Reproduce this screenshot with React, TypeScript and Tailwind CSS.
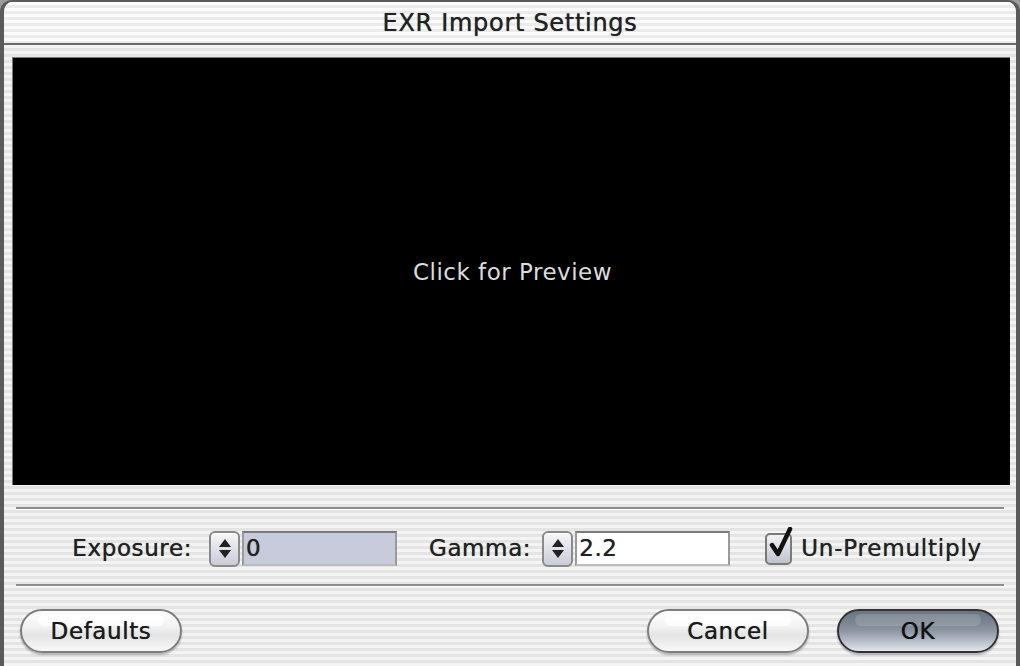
import React from "react";

const stripes =
  "bg-[repeating-linear-gradient(180deg,#f4f4f4_0px,#f4f4f4_3px,#e4e4e4_3px,#e4e4e4_6px)]";

const thick = "[text-shadow:0_0_0.7px_rgba(20,20,20,0.8)]";

function Stepper() {
  return (
    <div className="w-[31px] h-[36px] rounded-[6px] border-2 border-[#8a8a8a] bg-gradient-to-b from-[#f6f7fa] to-[#c9ccd6] flex flex-col items-center justify-center gap-[3px] shadow-[inset_0_1px_1px_rgba(255,255,255,0.9)]">
      <svg width="12" height="8" viewBox="0 0 12 8">
        <path d="M6 0 L12 8 L0 8 Z" fill="#222" />
      </svg>
      <svg width="12" height="8" viewBox="0 0 12 8">
        <path d="M0 0 L12 0 L6 8 Z" fill="#222" />
      </svg>
    </div>
  );
}

function Field({ value, tint }: { value: string; tint?: boolean }) {
  return (
    <div
      className={`w-[155px] h-[35px] border-2 border-t-[#7a7a7a] border-l-[#9a9a9a] border-r-[#9a9a9a] border-b-[#bdbdbd] flex items-center pl-[2px] text-[23px] tracking-[0.6px] text-[#222] ${thick} ${
        tint ? "bg-[#c8cbdb]" : "bg-white"
      }`}
    >
      {value}
    </div>
  );
}

function Separator() {
  return (
    <div className="mx-[12px] h-[3px] border-t-2 border-[#8c8c8c] bg-white/90" />
  );
}

function AquaButton({ label, primary }: { label: string; primary?: boolean }) {
  return (
    <div
      className={`relative w-[162px] h-[44px] rounded-full border-2 flex items-center justify-center text-[23px] tracking-[0.6px] ${thick} ${
        primary
          ? "border-[#333] bg-[linear-gradient(180deg,#6c7582_0%,#7c8593_30%,#8d96a3_50%,#b7bec8_75%,#e2e6ec_100%)] text-[#111]"
          : "border-[#7d7d7d] bg-[linear-gradient(180deg,#ffffff_0%,#f2f2f2_40%,#e4e4e4_60%,#f8f8f8_100%)] text-[#1a1a1a]"
      } shadow-[0_2px_2px_rgba(0,0,0,0.25)]`}
    >
      <div
        className={`absolute left-[16px] right-[16px] top-[3px] h-[12px] rounded-full ${
          primary ? "bg-white/15" : "bg-white/80"
        }`}
      />
      <span className="relative">{label}</span>
    </div>
  );
}

export default function App() {
  return (
    <div
      className="w-[1020px] h-[666px] bg-[#9a9a9a] overflow-hidden"
      style={{ fontFamily: '"DejaVu Sans", "Open Sans", sans-serif' }}
    >
      <div className="w-full h-full rounded-t-[12px] border-t-[2px] border-x-[4px] border-[#5a5a5a] overflow-hidden flex flex-col bg-[#f0f0f0]">
        {/* Title bar */}
        <div className="h-[43px] shrink-0 border-b-2 border-[#6a6a6a] flex items-center justify-center bg-[repeating-linear-gradient(180deg,#fbfbfb_0px,#fbfbfb_3px,#ebebeb_3px,#ebebeb_6px)]">
          <span
            className={`text-[24px] text-[#222] tracking-[0.7px] pt-[1px] ${thick}`}
          >
            EXR Import Settings
          </span>
        </div>

        {/* Body */}
        <div className={`flex-1 flex flex-col ${stripes}`}>
          <div className="pt-[12px] pl-[8px] pr-[6px]">
            <div className="h-[428px] bg-black border-t border-l border-[#777] flex items-center justify-center">
              <span className="text-[23px] tracking-[0.5px] text-[#dcdcdc] pt-[2px] pl-[2px]">
                Click for Preview
              </span>
            </div>
          </div>

          <div className="h-[22px]" />
          <Separator />

          {/* Controls row */}
          <div className="h-[74px] flex items-center pt-[3px]">
            <span
              className={`w-[188px] text-right text-[23px] tracking-[0.6px] text-[#222] ${thick}`}
            >
              Exposure:
            </span>
            <div className="ml-[17px] flex items-center gap-[2px]">
              <Stepper />
              <Field value="0" tint />
            </div>
            <span
              className={`ml-[32px] text-[23px] tracking-[0.6px] text-[#222] ${thick}`}
            >
              Gamma:
            </span>
            <div className="ml-[11px] flex items-center gap-[2px]">
              <Stepper />
              <Field value="2.2" />
            </div>
            <div className="ml-[35px] flex items-center gap-[9px]">
              <div className="relative w-[27px] h-[32px] rounded-[5px] border-2 border-[#7a7a7a] bg-gradient-to-b from-[#f2f3f6] to-[#bfc3cd]">
                <svg
                  className="absolute left-[1px] top-[-8px]"
                  width="28"
                  height="34"
                  viewBox="0 0 28 34"
                >
                  <path
                    d="M4 18 L10 27 L22 2"
                    fill="none"
                    stroke="#111"
                    strokeWidth="4.5"
                    strokeLinecap="round"
                    strokeLinejoin="round"
                  />
                </svg>
              </div>
              <span
                className={`text-[23px] tracking-[0.8px] text-[#222] ${thick}`}
              >
                Un-Premultiply
              </span>
            </div>
          </div>

          <Separator />

          {/* Buttons */}
          <div className="flex items-center pt-[22px] pl-[16px] pr-[17px]">
            <AquaButton label="Defaults" />
            <div className="flex-1" />
            <AquaButton label="Cancel" />
            <div className="w-[28px]" />
            <AquaButton label="OK" primary />
          </div>
        </div>
      </div>
    </div>
  );
}
